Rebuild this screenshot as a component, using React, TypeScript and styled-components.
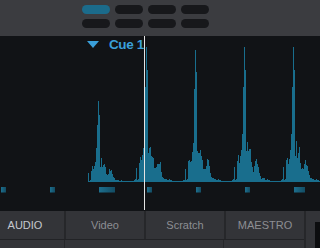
import React from "react";
import styled, { createGlobalStyle } from "styled-components";

const GlobalStyle = createGlobalStyle`
  html, body {
    margin: 0;
    padding: 0;
    background: #111316;
  }
  body {
    font-family: "Liberation Sans", Arial, sans-serif;
  }
`;

// beat profile, offsets -12..36 relative to the transient
const PROFILE = [
  2, 3, 16, 2, 3, 22, 26, 20, 24, 30, 48, 95, 135, 112, 28, 34, 30, 32, 30, 22,
  14, 12, 13, 18, 20, 19, 17, 10, 6, 4, 4, 3, 3, 2, 2, 3, 2, 2, 1, 1, 1, 1, 1,
  1, 1, 1, 1, 1, 1,
];

const BEATS = [
  { c: 98, s: 0.6 },
  { c: 146, s: 1 },
  { c: 195, s: 0.98 },
  { c: 244, s: 1 },
  { c: 293, s: 1 },
];

const MARKERS = [
  { x: 1, w: 5 },
  { x: 50, w: 5 },
  { x: 99, w: 16 },
  { x: 147, w: 5 },
  { x: 196, w: 5 },
  { x: 245, w: 5 },
  { x: 294, w: 11 },
];

const BASE = 146;
const PLAYHEAD = 144;

const jitter = (x: number) => {
  const v = Math.sin(x * 12.9898) * 43758.5453;
  return v - Math.floor(v);
};

const waveHeights = () => {
  const out: number[] = [];
  for (let x = 88; x < 320; x++) {
    let h = 1;
    BEATS.forEach((b) => {
      const i = x - b.c + 12;
      if (i >= 0 && i < PROFILE.length) {
        const p = PROFILE[i];
        const j = p > 60 ? 1 : 0.8 + jitter(x) * 0.4;
        h = Math.max(h, Math.round(p * b.s * j));
      }
    });
    out.push(Math.max(1, h));
  }
  return out;
};

const wavePath = () => {
  const hs = waveHeights();
  let d = `M88,${BASE}`;
  hs.forEach((h, i) => {
    d += ` V${BASE - h} H${88 + i + 1}`;
  });
  d += ` V${BASE} Z`;
  return d;
};

const Screen = styled.div`
  width: 320px;
  height: 248px;
  display: flex;
  flex-direction: column;
  overflow: hidden;
  background: #111316;
`;

const PadDeck = styled.div`
  height: 36px;
  box-sizing: border-box;
  padding: 5px 0 0 82px;
  background: #3b3c40;
  display: grid;
  grid-template-columns: repeat(4, 28px);
  grid-auto-rows: 8.5px;
  column-gap: 5px;
  row-gap: 5.5px;
`;

const Pad = styled.div<{ $on?: boolean }>`
  border-radius: 4.5px;
  background: ${(p) => (p.$on ? "#1b6b8b" : "#17181b")};
`;

const WaveArea = styled.div`
  position: relative;
  height: 175px;
  background: #111316;
`;

const CueFlag = styled.div`
  position: absolute;
  left: 87px;
  top: 2px;
  display: flex;
  align-items: center;
  gap: 10px;
`;

const CueArrow = styled.div`
  width: 0;
  height: 0;
  border-left: 6px solid transparent;
  border-right: 6px solid transparent;
  border-top: 7px solid #3a9fd9;
  margin-top: -2px;
`;

const CueLabel = styled.span`
  font-family: "Liberation Sans", Arial, sans-serif;
  font-weight: 700;
  font-size: 13.5px;
  letter-spacing: -0.4px;
  color: #3a9fd9;
  line-height: 14px;
`;

const TabBar = styled.div`
  flex: 1;
  display: flex;
  background: #333438;
`;

const TabColumn = styled.div`
  width: 304px;
  display: flex;
  flex-direction: column;
`;

const TabRow = styled.div`
  display: flex;
  height: 28px;
  margin-left: -14px;
  border-bottom: 1px solid #222326;
`;

const Tab = styled.div<{ $active?: boolean }>`
  width: 80px;
  display: flex;
  align-items: center;
  justify-content: center;
  font-size: 11px;
  color: ${(p) => (p.$active ? "#c4c8ce" : "#8c8e93")};
  border-left: 2px solid #26272a;
  box-sizing: border-box;
  &:first-child {
    width: 78px;
    border-left: none;
  }
`;

const SubRow = styled.div`
  flex: 1;
  display: flex;
`;

const SubCell = styled.div<{ $w: number }>`
  width: ${(p) => p.$w}px;
  border-right: 1px solid #26272a;
  box-sizing: border-box;
`;

const SidePanel = styled.div`
  flex: 1;
  border-left: 2px solid #26272a;
  display: flex;
  flex-direction: column;
  padding-top: 11px;
  padding-left: 9px;
`;

const SideScreen = styled.div`
  flex: 1;
  background: #0c0d0f;
`;

const Waveform = () => (
  <svg width="320" height="175" style={{ display: "block" }}>
    <defs>
      <linearGradient id="mk" x1="0" x2="1" y1="0" y2="0">
        <stop offset="0" stopColor="#1d6f8e" />
        <stop offset="1" stopColor="#134c63" />
      </linearGradient>
    </defs>
    <path d={wavePath()} fill="#196e8d" />
    {MARKERS.map((m) => (
      <rect key={m.x} x={m.x} y={151} width={m.w} height={5.5} fill="url(#mk)" />
    ))}
    <rect x={PLAYHEAD} y={0} width={1} height={174} fill="#e4e4e4" />
  </svg>
);

export default function App() {
  return (
    <Screen>
      <GlobalStyle />
      <PadDeck>
        <Pad $on />
        <Pad />
        <Pad />
        <Pad />
        <Pad />
        <Pad />
        <Pad />
        <Pad />
      </PadDeck>
      <WaveArea>
        <Waveform />
        <CueFlag>
          <CueArrow />
          <CueLabel>Cue 1</CueLabel>
        </CueFlag>
      </WaveArea>
      <TabBar>
        <TabColumn>
          <TabRow>
            <Tab $active>AUDIO</Tab>
            <Tab>Video</Tab>
            <Tab>Scratch</Tab>
            <Tab>MAESTRO</Tab>
          </TabRow>
          <SubRow>
            <SubCell $w={65} />
            <SubCell $w={159} />
          </SubRow>
        </TabColumn>
        <SidePanel>
          <SideScreen />
        </SidePanel>
      </TabBar>
    </Screen>
  );
}
